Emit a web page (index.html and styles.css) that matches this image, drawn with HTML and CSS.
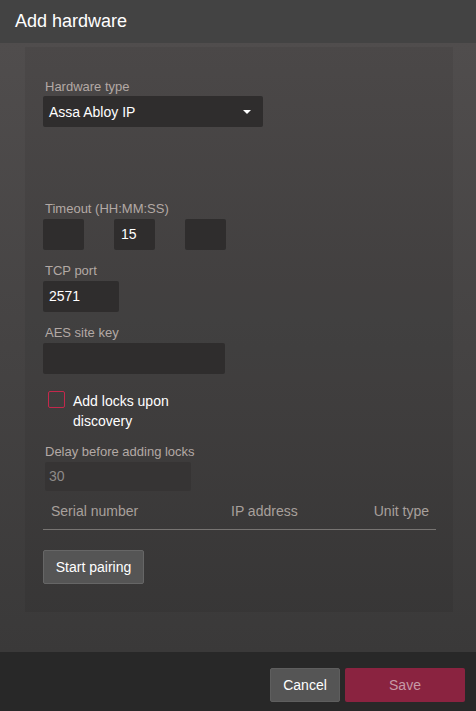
FILE: index.html
```html
<!DOCTYPE html>
<html lang="en">

<head>
    <meta charset="UTF-8">
    <meta name="viewport" content="width=device-width, initial-scale=1.0">
    <title>Add hardware</title>
    <link rel="stylesheet" href="styles.css">
</head>

<body>
    <div class="dialog">
        <header class="dialog-header">
            <h1>Add hardware</h1>
        </header>

        <div class="dialog-body">
            <div class="panel">
                <div class="field field-type">
                    <label class="field-label">Hardware type</label>
                    <div class="select">
                        <span>Assa Abloy IP</span>
                        <span class="caret"></span>
                    </div>
                </div>

                <div class="field field-timeout">
                    <label class="field-label">Timeout (HH:MM:SS)</label>
                    <div class="time-row">
                        <div class="input input-time"></div>
                        <div class="input input-time">15</div>
                        <div class="input input-time"></div>
                    </div>
                </div>

                <div class="field">
                    <label class="field-label">TCP port</label>
                    <div class="input input-port">2571</div>
                </div>

                <div class="field">
                    <label class="field-label">AES site key</label>
                    <div class="input input-key"></div>
                </div>

                <div class="check-row">
                    <span class="checkbox"></span>
                    <span class="check-label">Add locks upon<br>discovery</span>
                </div>

                <div class="field field-delay">
                    <label class="field-label">Delay before adding locks</label>
                    <div class="input input-delay">30</div>
                </div>

                <div class="table-head">
                    <span class="col-serial">Serial number</span>
                    <span class="col-ip">IP address</span>
                    <span class="col-unit">Unit type</span>
                </div>

                <button class="btn btn-pair">Start pairing</button>
            </div>
        </div>

        <footer class="dialog-footer">
            <button class="btn btn-cancel">Cancel</button>
            <button class="btn btn-save">Save</button>
        </footer>
    </div>
</body>

</html>
```

FILE: styles.css
```css
body {
    margin: 0;
    font-family: "Liberation Sans", Arial, sans-serif;
    background: #282828;
}

.dialog {
    width: 476px;
    height: 711px;
    display: flex;
    flex-direction: column;
}

.dialog-header {
    height: 43px;
    background: #434343;
    display: flex;
    align-items: center;
    padding: 0 15px;
    flex-shrink: 0;
}

.dialog-header h1 {
    margin: 0;
    font-size: 18px;
    font-weight: normal;
    color: #ffffff;
}

.dialog-body {
    flex: 1;
    background: linear-gradient(180deg, #504d4d 0%, #3a3939 100%);
    padding: 4px 23px 0 25px;
}

.panel {
    height: 565px;
    box-sizing: border-box;
    background: rgba(0, 0, 0, 0.06);
    padding: 32px 18px 0 18px;
    display: flex;
    flex-direction: column;
    align-items: flex-start;
}

.field {
    display: flex;
    flex-direction: column;
    margin-bottom: 13px;
}

.field-label {
    font-size: 13px;
    color: #b3a9a5;
    margin-bottom: 3px;
    line-height: 15px;
    padding-left: 2px;
}

.field-type .field-label {
    margin-bottom: 2px;
}

.select {
    width: 220px;
    height: 31px;
    box-sizing: border-box;
    background: #2f2d2d;
    border-radius: 2px;
    display: flex;
    align-items: center;
    justify-content: space-between;
    padding: 0 12px 0 6px;
    color: #ffffff;
    font-size: 14px;
}

.caret {
    width: 0;
    height: 0;
    border-left: 4px solid transparent;
    border-right: 4px solid transparent;
    border-top: 4px solid #ffffff;
}

.field-timeout {
    margin-top: 61px;
}

.time-row {
    display: flex;
    gap: 30px;
}

.input {
    height: 31px;
    box-sizing: border-box;
    background: #2f2d2d;
    border-radius: 2px;
    color: #ffffff;
    font-size: 14px;
    line-height: 31px;
    padding: 0 6px;
}

.input-time {
    width: 41px;
    padding-left: 7px;
}

.input-port {
    width: 76px;
}

.input-key {
    width: 182px;
}

.check-row {
    display: flex;
    align-items: flex-start;
    margin: 4px 0 13px 5px;
}

.checkbox {
    width: 17px;
    height: 17px;
    box-sizing: border-box;
    border: 1px solid #c4284c;
    border-radius: 2px;
    margin-top: 0;
    flex-shrink: 0;
}

.check-label {
    margin-left: 8px;
    color: #ffffff;
    font-size: 14px;
    line-height: 20px;
}

.field-delay {
    margin-bottom: 12px;
}

.input-delay {
    width: 146px;
    height: 29px;
    line-height: 29px;
    margin-left: 2px;
    background: #363434;
    color: #8d8a88;
    padding-left: 4px;
}

.table-head {
    width: 393px;
    display: flex;
    font-size: 14px;
    line-height: 16px;
    color: #a8a09c;
    border-bottom: 1px solid #777472;
    padding: 0 0 10px 0;
    margin-bottom: 20px;
}

.col-serial {
    margin-left: 8px;
    width: 180px;
}

.col-ip {
    flex: 1;
}

.col-unit {
    margin-right: 7px;
}

.btn {
    font-family: "Liberation Sans", Arial, sans-serif;
    font-size: 14px;
    color: #ffffff;
    border-radius: 2px;
    cursor: pointer;
}

.btn-pair {
    width: 101px;
    height: 34px;
    background: #555555;
    border: 1px solid #666666;
}

.dialog-footer {
    height: 59px;
    background: #282828;
    display: flex;
    justify-content: flex-end;
    align-items: flex-start;
    gap: 5px;
    padding: 16px 11px 0 0;
    box-sizing: border-box;
    flex-shrink: 0;
}

.btn-cancel {
    width: 70px;
    height: 34px;
    background: #555555;
    border: 1px solid #5e5e5e;
}

.btn-save {
    width: 120px;
    height: 34px;
    background: #8a2340;
    border: none;
    color: #c69aa6;
}
```
